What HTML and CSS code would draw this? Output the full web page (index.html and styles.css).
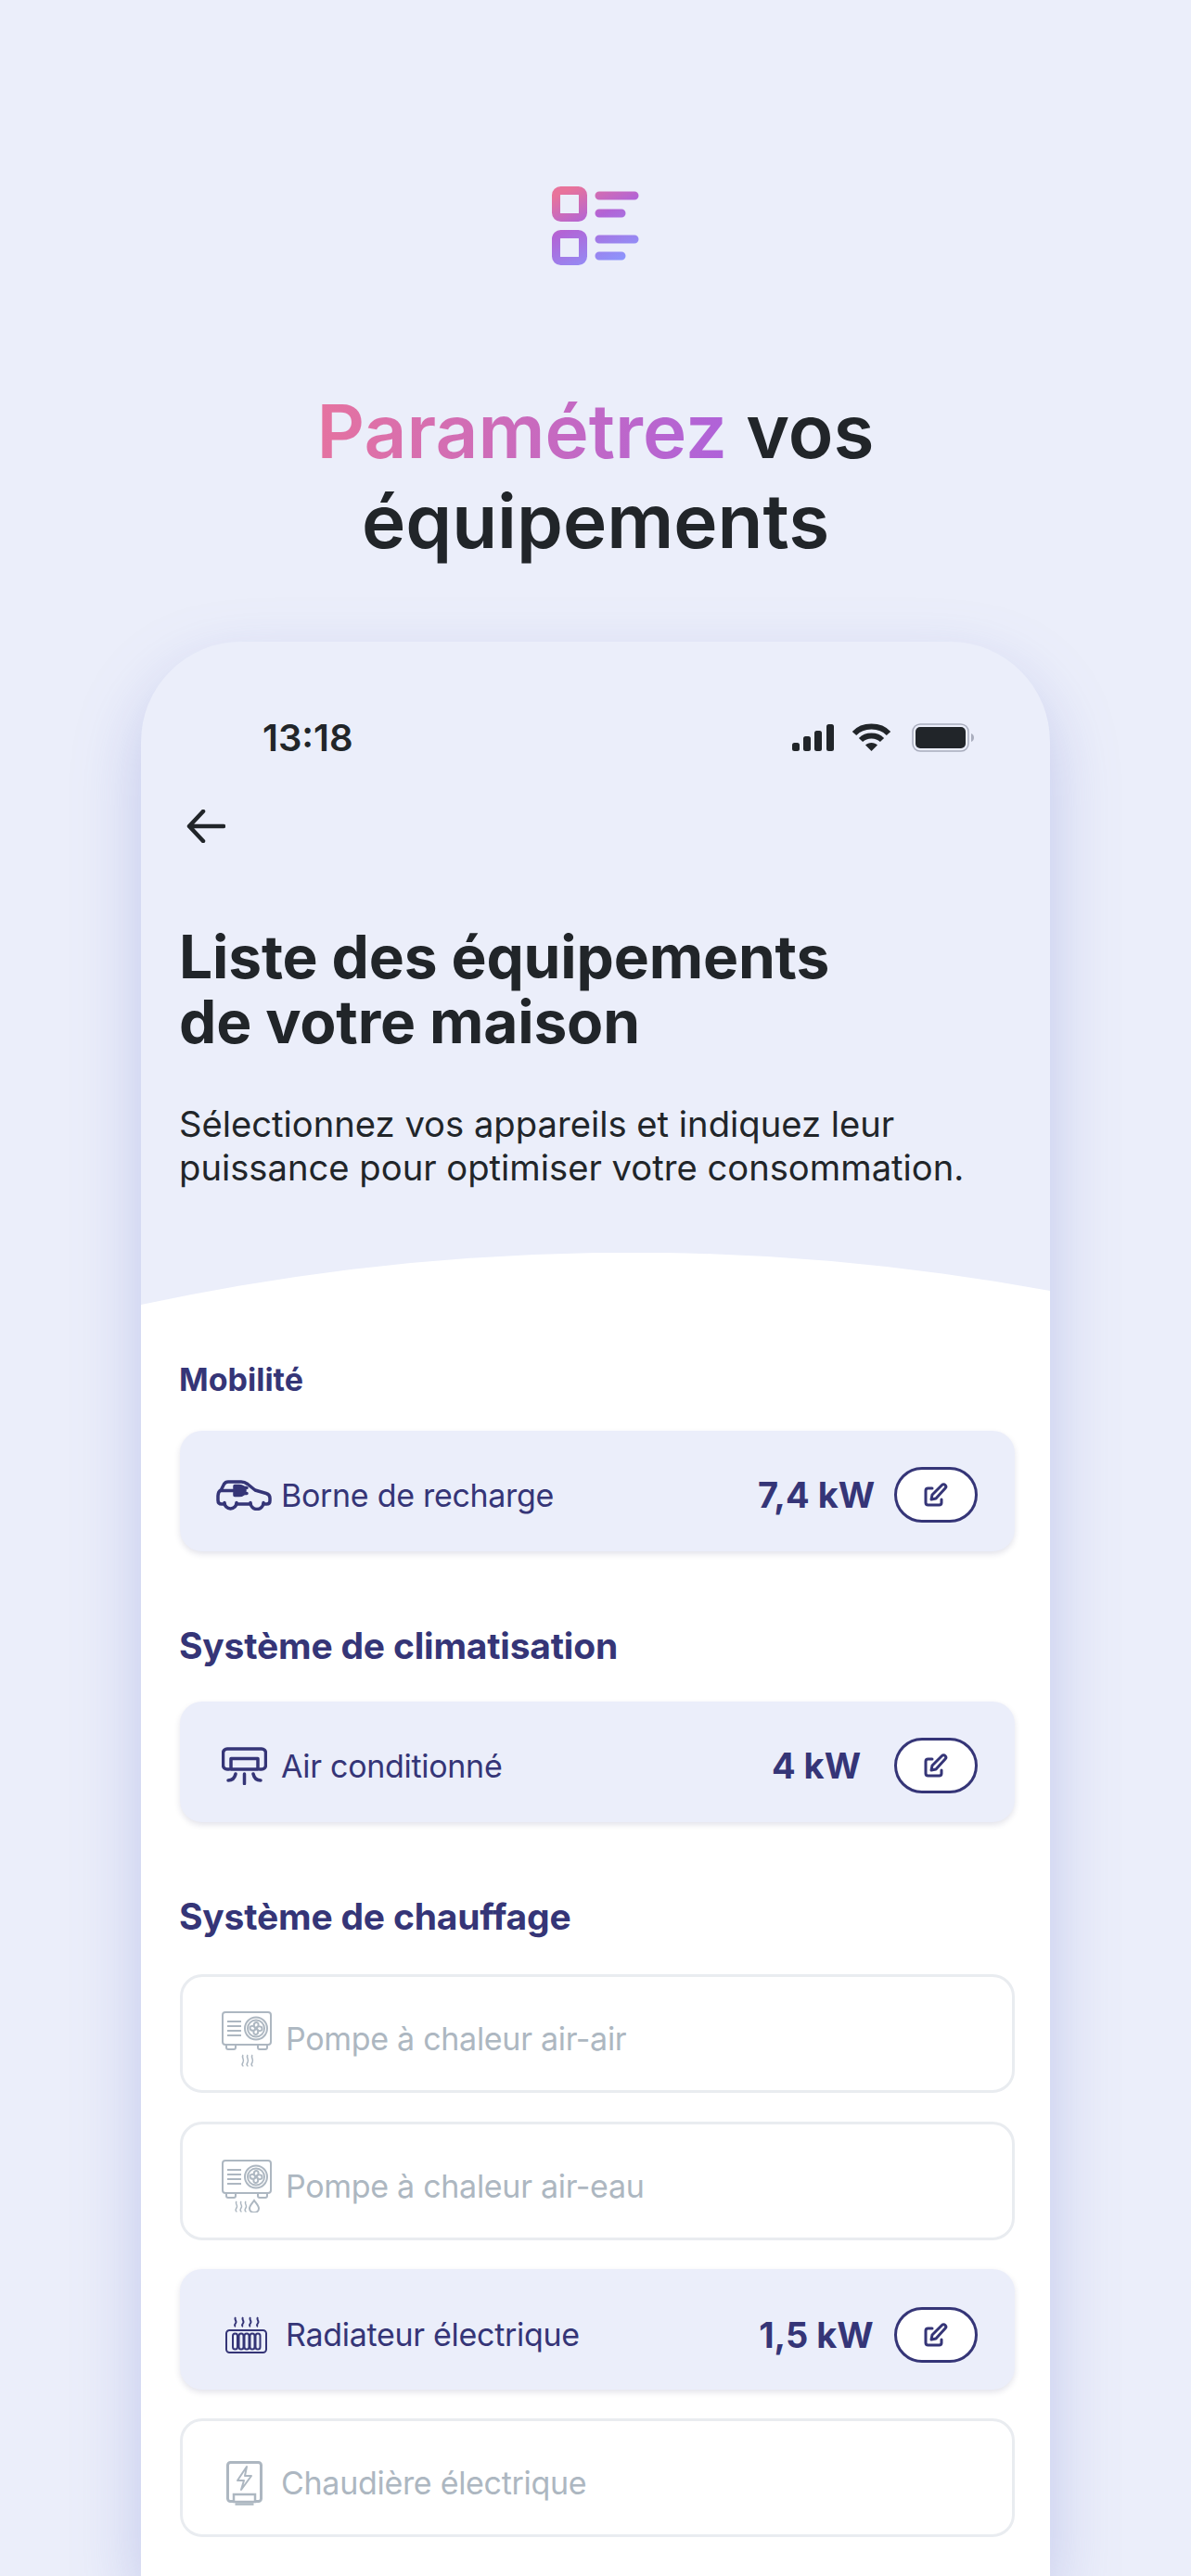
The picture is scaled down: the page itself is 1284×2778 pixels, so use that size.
FILE: index.html
```html
<!DOCTYPE html>
<html lang="fr">
<head>
<meta charset="UTF-8">
<title>Paramétrez vos équipements</title>
<link rel="stylesheet" href="styles.css">
</head>
<body>

<header class="promo">
  <svg class="promo-icon" width="94" height="85" viewBox="0 0 94 85" fill="none">
    <defs>
      <linearGradient id="grad" gradientUnits="userSpaceOnUse" x1="25" y1="0" x2="65" y2="85">
        <stop offset="0" stop-color="#e8739b"/>
        <stop offset="0.42" stop-color="#b264d6"/>
        <stop offset="1" stop-color="#8c96fd"/>
      </linearGradient>
    </defs>
    <g stroke="url(#grad)" stroke-width="9" stroke-linecap="round">
      <rect x="4.5" y="4.5" width="29" height="29" rx="5"/>
      <rect x="4.5" y="51.5" width="29" height="29" rx="5"/>
      <path d="M51 10H89M51 29H75M51 57H89M51 75H75"/>
    </g>
  </svg>
  <h1 class="promo-title"><span class="accent">Paramétrez</span> vos<br>équipements</h1>
</header>

<main class="phone">
  <section class="hero">
    <div class="statusbar">
      <span class="time">13:18</span>
      <div class="status-icons">
        <svg width="45" height="29" viewBox="0 0 45 29" fill="#212529">
          <rect x="0" y="20" width="8" height="9" rx="2.5"/>
          <rect x="12" y="13" width="8" height="16" rx="2.5"/>
          <rect x="24" y="7" width="8" height="22" rx="2.5"/>
          <rect x="37" y="0" width="8" height="29" rx="2.5"/>
        </svg>
        <svg width="43" height="30" viewBox="0 0 43 30" fill="none" stroke="#212529" stroke-width="6">
          <path d="M3 11C12 1 31 1 40 11"/>
          <path d="M10 18C16 12 27 12 33 18"/>
          <path d="M21.5 30L15 23.5C18 20 25 20 28 23.5Z" fill="#212529" stroke="none"/>
        </svg>
        <svg class="battery" width="68" height="31" viewBox="0 0 68 31" fill="none">
          <rect x="1" y="1" width="60" height="29" rx="8" stroke="#a9adbd" stroke-width="1.5"/>
          <rect x="4" y="4" width="54" height="23" rx="5" fill="#212529"/>
          <path d="M64 11c2 .8 3 2.500 3 4.500s-1 3.700-3 4.500z" fill="#a9adbd"/>
        </svg>
      </div>
    </div>
    <svg class="back" width="42" height="36" viewBox="0 0 42 36" fill="none" stroke="#212529" stroke-width="4.500" stroke-linecap="round" stroke-linejoin="round">
      <path d="M40 18H3M18 2L3 18L18 34"/>
    </svg>
    <h2 class="hero-title">Liste des équipements<br>de votre maison</h2>
    <p class="hero-text">Sélectionnez vos appareils et indiquez leur<br>puissance pour optimiser votre consommation.</p>
  </section>

  <svg class="curve" width="980" height="56" viewBox="0 0 980 56">
    <path d="M0 56Q490 -48.500 980 41V56Z" fill="#fff"/>
  </svg>

  <section class="list">
    <h3 class="group small">Mobilité</h3>
    <div class="card on">
      <div class="card-icon">
        <svg width="60" height="33" viewBox="0 0 60 33" fill="none" stroke="#353577" stroke-width="3.500" stroke-linecap="round" stroke-linejoin="round">
          <path d="M9 26H6c-2.500 0-4-1.500-4-4v-5c0-3 1-5 3.500-6.500l3-6C9.500 2.800 11 2 13 2h14c3 0 5 1 7 2.500l8 6.500 12 3.500c2.500.8 4 2.500 4 5v3c0 2.200-1.300 3.500-3.500 3.500H52"/>
          <path d="M22 26H37"/>
          <path d="M9 24.500a6.500 6.500 0 0 0 13 0"/>
          <path d="M37 24.500a7 7 0 0 0 14 0"/>
          <path d="M5 11.500H18M29 8.500h4M29 14.500h4"/>
          <path d="M20 6.500h5a6 5 0 0 1 0 10h-5z" fill="#353577"/>
        </svg>
      </div>
      <span class="card-label">Borne de recharge</span>
      <span class="card-value">7,4 kW</span>
      <button class="edit">
        <svg width="26" height="26" viewBox="0 0 26 26" fill="none" stroke="#353577" stroke-width="3" stroke-linecap="round" stroke-linejoin="round">
          <path d="M9 6H4.500A2.500 2.500 0 0 0 2 8.500v13A2.500 2.500 0 0 0 4.500 24h12a2.500 2.500 0 0 0 2.500-2.500V18"/>
          <path d="M8 18l1-5L19.500 2.500c1-1 2.500-1 3.500 0s1 2.500 0 3.500L13 17z"/>
        </svg>
      </button>
    </div>

    <h3 class="group">Système de climatisation</h3>
    <div class="card on">
      <div class="card-icon">
        <svg width="49" height="41" viewBox="0 0 49 41" fill="none" stroke="#353577" stroke-width="3.500" stroke-linecap="round" stroke-linejoin="round">
          <path d="M8 24H6a4.500 4.500 0 0 1-4.500-4.500V6.500A4.500 4.500 0 0 1 6 2h37a4.500 4.500 0 0 1 4.500 4.500v13A4.500 4.500 0 0 1 43 24h-2"/>
          <path d="M10 24V12.500h29V24H10"/>
          <path d="M24.500 29V39.500M7 36c4 0 7-2.500 8-7M42 36c-4 0-7-2.500-8-7"/>
        </svg>
      </div>
      <span class="card-label">Air conditionné</span>
      <span class="card-value">4 kW</span>
      <button class="edit">
        <svg width="26" height="26" viewBox="0 0 26 26" fill="none" stroke="#353577" stroke-width="3" stroke-linecap="round" stroke-linejoin="round">
          <path d="M9 6H4.500A2.500 2.500 0 0 0 2 8.500v13A2.500 2.500 0 0 0 4.500 24h12a2.500 2.500 0 0 0 2.500-2.500V18"/>
          <path d="M8 18l1-5L19.500 2.500c1-1 2.500-1 3.500 0s1 2.500 0 3.500L13 17z"/>
        </svg>
      </button>
    </div>

    <h3 class="group">Système de chauffage</h3>
    <div class="stack">
      <div class="card off">
        <div class="card-icon wide">
          <svg width="54" height="60" viewBox="0 0 54 60" fill="none" stroke="#adb7c1" stroke-width="2">
            <rect x="1" y="1" width="52" height="35" rx="3"/>
            <path d="M6 11H21M6 16H21M6 21H21M6 26H21"/>
            <circle cx="37" cy="18.500" r="12"/>
            <circle cx="37" cy="18.500" r="9"/>
            <path d="M37 18.500c-3-1-3-6 0-6.500s4 4 0 6.500zM37 18.500c1-3 6-3 6.500 0s-4 4-6.500 0zM37 18.500c3 1 3 6 0 6.500s-4-4 0-6.500zM37 18.500c-1 3-6 3-6.500 0s4-4 6.500 0z"/>
            <path d="M5 36v3c0 1 1 2 2 2h6c1 0 2-1 2-2v-3M39 36v3c0 1 1 2 2 2h6c1 0 2-1 2-2v-3"/>
            <path d="M23 47c-2 3 2 5 0 8s0 4 .5 4M28 47c-2 3 2 5 0 8s0 4 .5 4M33 47c-2 3 2 5 0 8s0 4 .5 4" stroke-width="1.500"/>
          </svg>
        </div>
        <span class="card-label">Pompe à chaleur air-air</span>
      </div>
      <div class="card off">
        <div class="card-icon wide">
          <svg width="54" height="57" viewBox="0 0 54 57" fill="none" stroke="#adb7c1" stroke-width="2">
            <rect x="1" y="1" width="52" height="35" rx="3"/>
            <path d="M6 11H21M6 16H21M6 21H21M6 26H21"/>
            <circle cx="37" cy="18.500" r="12"/>
            <circle cx="37" cy="18.500" r="9"/>
            <path d="M37 18.500c-3-1-3-6 0-6.500s4 4 0 6.500zM37 18.500c1-3 6-3 6.500 0s-4 4-6.500 0zM37 18.500c3 1 3 6 0 6.500s-4-4 0-6.500zM37 18.500c-1 3-6 3-6.500 0s4-4 6.500 0z"/>
            <path d="M5 36v3c0 1 1 2 2 2h6c1 0 2-1 2-2v-3M39 36v3c0 1 1 2 2 2h6c1 0 2-1 2-2v-3"/>
            <path d="M16 45c-2 3 2 4 0 7s0 4 .5 4M21 45c-2 3 2 4 0 7s0 4 .5 4M26 45c-2 3 2 4 0 7s0 4 .5 4" stroke-width="1.500"/>
            <path d="M35 44c-2 3-5 6-5 8.500a5 4.500 0 0 0 10 0c0-2.500-3-5.500-5-8.500z"/>
          </svg>
        </div>
        <span class="card-label">Pompe à chaleur air-eau</span>
      </div>
      <div class="card on">
        <div class="card-icon wide">
          <svg width="45" height="40" viewBox="0 0 45 40" fill="none" stroke="#353577" stroke-width="2">
            <path d="M11 1c-2 2.500 2 4 0 6.500s0 3.500 0 3.500M19 1c-2 2.500 2 4 0 6.500s0 3.500 0 3.500M27 1c-2 2.500 2 4 0 6.500s0 3.500 0 3.500M35 1c-2 2.500 2 4 0 6.500s0 3.500 0 3.500"/>
            <rect x="1" y="15" width="43" height="24" rx="3.500"/>
            <rect x="8" y="18.500" width="5" height="17" rx="2.500"/>
            <rect x="14.500" y="18.500" width="5" height="17" rx="2.500"/>
            <rect x="20.500" y="18.500" width="5" height="17" rx="2.500"/>
            <rect x="26.500" y="18.500" width="5" height="17" rx="2.500"/>
            <rect x="32.500" y="18.500" width="5" height="17" rx="2.500"/>
          </svg>
        </div>
        <span class="card-label">Radiateur électrique</span>
        <span class="card-value">1,5 kW</span>
        <button class="edit">
          <svg width="26" height="26" viewBox="0 0 26 26" fill="none" stroke="#353577" stroke-width="3" stroke-linecap="round" stroke-linejoin="round">
            <path d="M9 6H4.500A2.500 2.500 0 0 0 2 8.500v13A2.500 2.500 0 0 0 4.500 24h12a2.500 2.500 0 0 0 2.500-2.500V18"/>
            <path d="M8 18l1-5L19.500 2.500c1-1 2.500-1 3.500 0s1 2.500 0 3.500L13 17z"/>
          </svg>
        </button>
      </div>
      <div class="card off">
        <div class="card-icon">
          <svg width="39" height="48" viewBox="0 0 39 48" fill="none" stroke="#adb7c1" stroke-width="3">
            <rect x="1.500" y="1.500" width="36" height="42" rx="3"/>
            <path d="M22 6L12 21H19L16 31L27 16H20Z" stroke-width="2" stroke-linejoin="round"/>
            <rect x="8" y="36" width="23" height="8" fill="#fff" stroke-width="2.500"/>
            <path d="M9.500 46.500H29.500" stroke-width="2.500"/>
          </svg>
        </div>
        <span class="card-label">Chaudière électrique</span>
      </div>
    </div>
  </section>
</main>

</body>
</html>
```

FILE: styles.css
```css
html, body {
  margin: 0;
  height: 2778px;
  overflow: hidden;
}
body {
  background: #ebeefa;
  font-family: Inter, "Noto Sans", sans-serif;
  color: #212529;
}
.promo {
  padding-top: 201px;
  text-align: center;
}
.promo-icon {
  display: block;
  margin: 0 auto;
}
.promo-title {
  margin: 130px 0 0;
  font-size: 80px;
  line-height: 97px;
  font-weight: 600;
}
.accent {
  background: linear-gradient(100deg, #e6739f, #ae62da);
  -webkit-background-clip: text;
  background-clip: text;
  color: transparent;
}
.phone {
  width: 980px;
  margin: 82px auto 0;
  border-radius: 108px 108px 0 0;
  background: #ebeefa;
  box-shadow: 0 30px 70px rgba(120, 130, 210, 0.36);
}
.hero {
  padding: 0 41px;
}
.statusbar {
  display: flex;
  justify-content: space-between;
  align-items: center;
  height: 60px;
  padding: 73px 40px 0 90px;
}
.time {
  font-size: 40px;
  font-weight: 600;
}
.status-icons {
  display: flex;
  align-items: center;
  gap: 19px;
}
.battery {
  margin-left: 3px;
}
.back {
  display: block;
  margin: 48px 0 0 8px;
}
.hero-title {
  margin: 88px 0 0;
  font-size: 64px;
  line-height: 70px;
  font-weight: 700;
  letter-spacing: -0.15px;
}
.hero-text {
  margin: 52px 0 0;
  font-size: 38.2px;
  line-height: 47px;
  font-weight: 400;
}
.curve {
  display: block;
  margin-top: 68px;
}
.list {
  background: #fff;
  padding: 28px 38px 42px 42px;
}
.group {
  margin: 77px 0 35px -1px;
  font-size: 39px;
  line-height: 50px;
  font-weight: 700;
  letter-spacing: -0.2px;
  color: #353577;
}
.group.small {
  margin-top: 28px;
  margin-bottom: 30px;
  font-size: 34px;
  letter-spacing: 0;
}
.stack {
  display: flex;
  flex-direction: column;
  gap: 31px;
  margin-top: 37px;
}
.card {
  display: flex;
  align-items: center;
  box-sizing: border-box;
  height: 130px;
  padding: 8px 40px 0 39px;
  border-radius: 24px;
  font-size: 34px;
  letter-spacing: -0.3px;
}
.stack .card {
  padding-top: 11px;
}
.card.on {
  background: #ebeefa;
  color: #353577;
  box-shadow: 0 3px 6px rgba(40, 40, 90, 0.13);
}
.card.off {
  height: 128px;
  border: 3px solid #e9ecf0;
  color: #adb7c1;
  padding-left: 36px;
}
.card-icon {
  display: flex;
  justify-content: center;
  width: 60px;
  margin-right: 10px;
  flex: none;
}
.card-icon.wide {
  width: 65px;
  margin-right: 10px;
}
.card-label {
  flex: 1;
}
.card-value {
  width: 140px;
  text-align: center;
  font-size: 38px;
  font-weight: 700;
  letter-spacing: 0;
}
.edit {
  display: flex;
  align-items: center;
  justify-content: center;
  width: 90px;
  height: 60px;
  margin-left: 14px;
  padding: 0;
  border: 3px solid #353577;
  border-radius: 30px;
  background: #fff;
}
```
